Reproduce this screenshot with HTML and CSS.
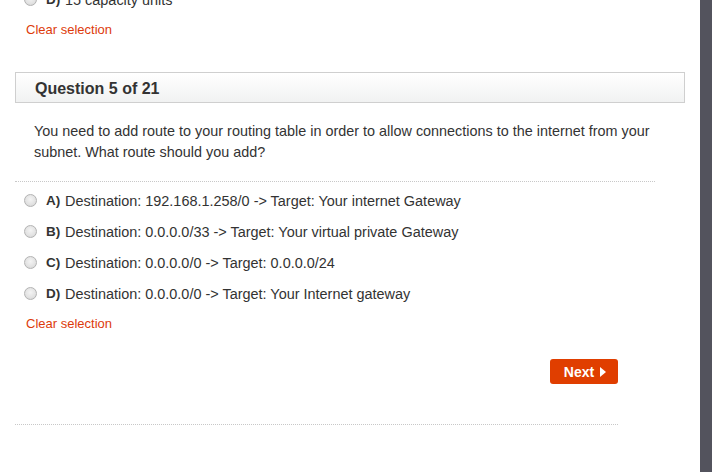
FILE: index.html
```html
<!DOCTYPE html>
<html>
<head>
<meta charset="utf-8">
<link rel="stylesheet" href="styles.css">
</head>
<body>
<div class="page">
  <div class="content">
    <div class="prev">
      <div class="opt"><span class="radio"></span><span class="key">D)</span><span class="txt">15 capacity units</span></div>
      <a class="clear">Clear selection</a>
    </div>

    <div class="qhead">Question 5 of 21</div>
    <p class="qtext">You need to add route to your routing table in order to allow connections to the internet from your subnet. What route should you add?</p>
    <div class="sep"></div>

    <div class="opts">
      <div class="opt"><span class="radio"></span><span class="key">A)</span><span class="txt">Destination: 192.168.1.258/0 -&gt; Target: Your internet Gateway</span></div>
      <div class="opt"><span class="radio"></span><span class="key">B)</span><span class="txt">Destination: 0.0.0.0/33 -&gt; Target: Your virtual private Gateway</span></div>
      <div class="opt"><span class="radio"></span><span class="key">C)</span><span class="txt">Destination: 0.0.0.0/0 -&gt; Target: 0.0.0.0/24</span></div>
      <div class="opt"><span class="radio"></span><span class="key">D)</span><span class="txt">Destination: 0.0.0.0/0 -&gt; Target: Your Internet gateway</span></div>
      <a class="clear">Clear selection</a>
    </div>

    <div class="actions">
      <button class="next">Next<span class="tri"></span></button>
    </div>
    <div class="sep bottom"></div>
  </div>
  <div class="scrollbar"></div>
</div>
</body>
</html>
```

FILE: styles.css
```css
html, body {
  margin: 0;
  padding: 0;
  height: 100%;
  overflow: hidden;
  background: #fff;
}
body {
  font-family: "Liberation Sans", Arial, sans-serif;
  color: #333;
}
.page {
  display: flex;
  height: 472px;
}
.content {
  flex: 1;
  padding-left: 15px;
  overflow: hidden;
}
.scrollbar {
  width: 12px;
  background: #53535d;
}
.prev {
  margin-top: -16px;
}
.opt {
  display: flex;
  align-items: center;
  height: 31px;
  font-size: 14.45px;
  color: #333;
}
.radio {
  box-sizing: border-box;
  width: 13px;
  height: 13px;
  border-radius: 50%;
  border: 1px solid #b3b3b3;
  background: radial-gradient(circle at 50% 40%, #f4f4f4 0%, #e2e2e2 60%, #d0d0d0 100%);
  margin-left: 9px;
  margin-right: 9px;
  flex: none;
}
.key {
  font-weight: bold;
  font-size: 13.5px;
  color: #333;
  width: 19px;
  flex: none;
}
.txt {
  white-space: nowrap;
}
.clear {
  display: block;
  margin-top: 6px;
  margin-left: 11px;
  font-size: 13px;
  line-height: 17px;
  color: #dd3b0b;
}
.qhead {
  box-sizing: border-box;
  margin-top: 34px;
  width: 670px;
  height: 31px;
  border: 1px solid #cfcfcf;
  background: linear-gradient(#ffffff, #f1f2f2);
  padding-left: 19px;
  font-size: 16px;
  font-weight: bold;
  line-height: 32px;
  color: #333;
}
.qtext {
  margin: 0;
  padding: 18px 30px 18px 19px;
  font-size: 14.4px;
  line-height: 21px;
  color: #333;
}
.sep {
  width: 640px;
  border-top: 1px dotted #c8c8c8;
}
.opts {
  margin-top: 3px;
}
.actions {
  width: 603px;
  display: flex;
  justify-content: flex-end;
  margin-top: 27px;
}
.next {
  box-sizing: border-box;
  width: 68px;
  height: 25px;
  border: none;
  border-radius: 3px;
  background: #e03e00;
  color: #fff;
  font-family: "Liberation Sans", Arial, sans-serif;
  font-weight: bold;
  font-size: 14px;
  display: flex;
  align-items: center;
  justify-content: center;
  padding: 0 0 0 2px;
}
.tri {
  width: 0;
  height: 0;
  border-top: 5px solid transparent;
  border-bottom: 5px solid transparent;
  border-left: 6px solid #fff;
  margin-left: 6px;
}
.sep.bottom {
  width: 603px;
  margin-top: 40px;
}
```
